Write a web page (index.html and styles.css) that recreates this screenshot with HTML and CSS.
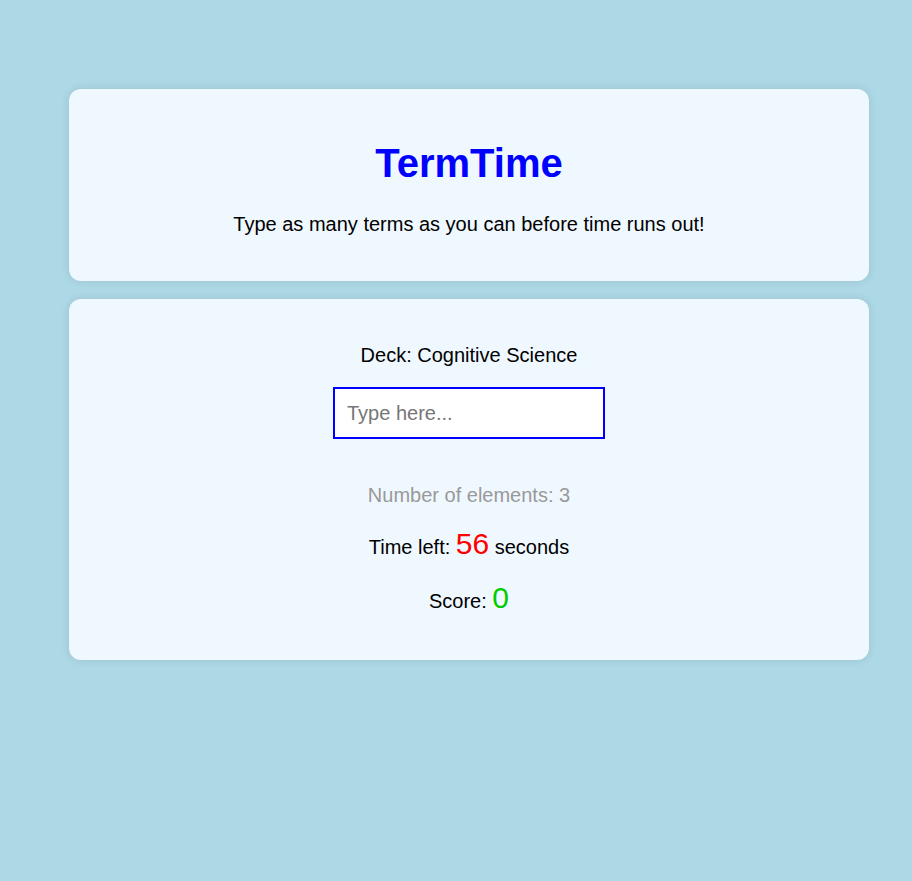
FILE: index.html
```html
<!DOCTYPE html>
<html lang="en">
<head>
<meta charset="utf-8">
<title>TermTime</title>
<link rel="stylesheet" href="styles.css">
</head>
<body>
<main class="app">
  <section class="card header-card">
    <h1 class="title">TermTime</h1>
    <p class="subtitle">Type as many terms as you can before time runs out!</p>
  </section>
  <section class="card game-card">
    <p class="deck">Deck: Cognitive Science</p>
    <div class="input-row">
      <input class="term-input" type="text" placeholder="Type here...">
    </div>
    <p class="count">Number of elements: 3</p>
    <p class="timer">Time left: <span class="time-value">56</span> seconds</p>
    <p class="score">Score: <span class="score-value">0</span></p>
  </section>
</main>
</body>
</html>
```
FILE: styles.css
```css
html, body {
  margin: 0;
  padding: 0;
}
body {
  background: #add8e6;
  font-family: "Liberation Sans", Arial, sans-serif;
  color: #000;
  min-height: 881px;
}
.app {
  width: 800px;
  margin: 89px 0 0 69px;
  display: flex;
  flex-direction: column;
  gap: 18px;
}
.card {
  background: #f0f8ff;
  border-radius: 12px;
  box-shadow: 0 0 10px rgba(0, 0, 0, 0.1);
  padding: 24px 24px 25px;
  text-align: center;
}
.title {
  font-size: 40px;
  font-weight: bold;
  color: #0000ff;
  margin: 27px 0;
  line-height: 46px;
}
.subtitle {
  font-size: 20px;
  margin: 0 0 20px;
  line-height: 23px;
}
.game-card {
  padding: 25px 24px 25px;
}
.game-card p {
  font-size: 20px;
  line-height: normal;
  margin: 20px 0;
}
.input-row {
  display: flex;
  justify-content: center;
  margin-bottom: 45px;
}
.term-input {
  box-sizing: border-box;
  width: 272px;
  height: 52px;
  padding: 12px;
  border: 2px solid #0000ff;
  font-family: "Liberation Sans", Arial, sans-serif;
  font-size: 20px;
  line-height: 24px;
  background: #fff;
  outline: none;
}
.term-input::placeholder {
  color: #767676;
}
.game-card p.count {
  color: #999;
  margin-top: 0;
}
.time-value {
  color: #ff0000;
  font-size: 30px;
}
.score-value {
  color: #00cc00;
  font-size: 30px;
}
```
